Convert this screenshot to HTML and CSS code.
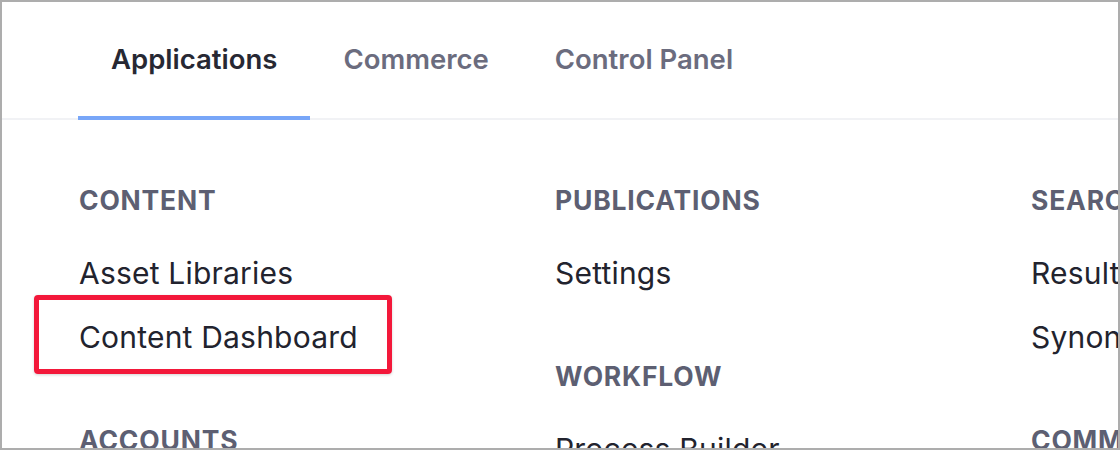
FILE: index.html
```html
<!DOCTYPE html>
<html lang="en">
<head>
<meta charset="utf-8">
<title>Applications menu</title>
<link rel="stylesheet" href="styles.css">
</head>
<body>
<div class="frame">
  <nav class="tabs">
    <a class="tab active">Applications</a>
    <a class="tab">Commerce</a>
    <a class="tab">Control Panel</a>
  </nav>
  <div class="grid">
    <div class="col">
      <div class="section">
        <div class="head">CONTENT</div>
        <div class="item">Asset Libraries</div>
        <div class="item highlighted">Content Dashboard<span class="mark"></span></div>
      </div>
      <div class="section">
        <div class="head">ACCOUNTS</div>
        <div class="item">Accounts</div>
      </div>
    </div>
    <div class="col">
      <div class="section">
        <div class="head">PUBLICATIONS</div>
        <div class="item">Settings</div>
      </div>
      <div class="section">
        <div class="head">WORKFLOW</div>
        <div class="item">Process Builder</div>
      </div>
    </div>
    <div class="col">
      <div class="section">
        <div class="head">SEARCH TUNING</div>
        <div class="item">Result Rankings</div>
        <div class="item">Synonym Sets</div>
      </div>
      <div class="section">
        <div class="head">COMMUNICATION</div>
        <div class="item">Message Boards</div>
      </div>
    </div>
  </div>
</div>
</body>
</html>
```

FILE: styles.css
```css
html, body {
  margin: 0;
  padding: 0;
  background: #ffffff;
}
.frame {
  box-sizing: border-box;
  width: 1120px;
  height: 450px;
  border: 2px solid #adadad;
  overflow: hidden;
  font-family: "Inter", "Liberation Sans", sans-serif;
}
.tabs {
  display: flex;
  padding-left: 76px;
  height: 116px;
  border-bottom: 2px solid #f1f2f5;
}
.tab {
  display: flex;
  align-items: center;
  padding: 0 33px;
  font-size: 27.5px;
  font-weight: 600;
  color: #6b6c7e;
  border-bottom: 4px solid transparent;
  margin-bottom: -2px;
}
.tab.active {
  color: #272833;
  border-bottom-color: #78a6f8;
}
.grid {
  display: grid;
  grid-template-columns: 476px 476px 476px;
  padding-left: 77px;
  padding-top: 60px;
}
.section {
  margin-bottom: 51px;
}
.head {
  height: 40px;
  line-height: 40px;
  font-size: 26.5px;
  font-weight: 700;
  color: #5d5f72;
  letter-spacing: 0.8px;
  margin-bottom: 21px;
  white-space: nowrap;
}
.item {
  position: relative;
  height: 64px;
  line-height: 64px;
  font-size: 30px;
  letter-spacing: 0.2px;
  color: #22232e;
  white-space: nowrap;
}
.mark {
  position: absolute;
  left: -45px;
  top: -10px;
  width: 358px;
  height: 79px;
  box-sizing: border-box;
  border: 5px solid #f3183a;
  border-radius: 4px;
  box-shadow: 0 1px 3px rgba(0,0,0,0.18);
}
```
